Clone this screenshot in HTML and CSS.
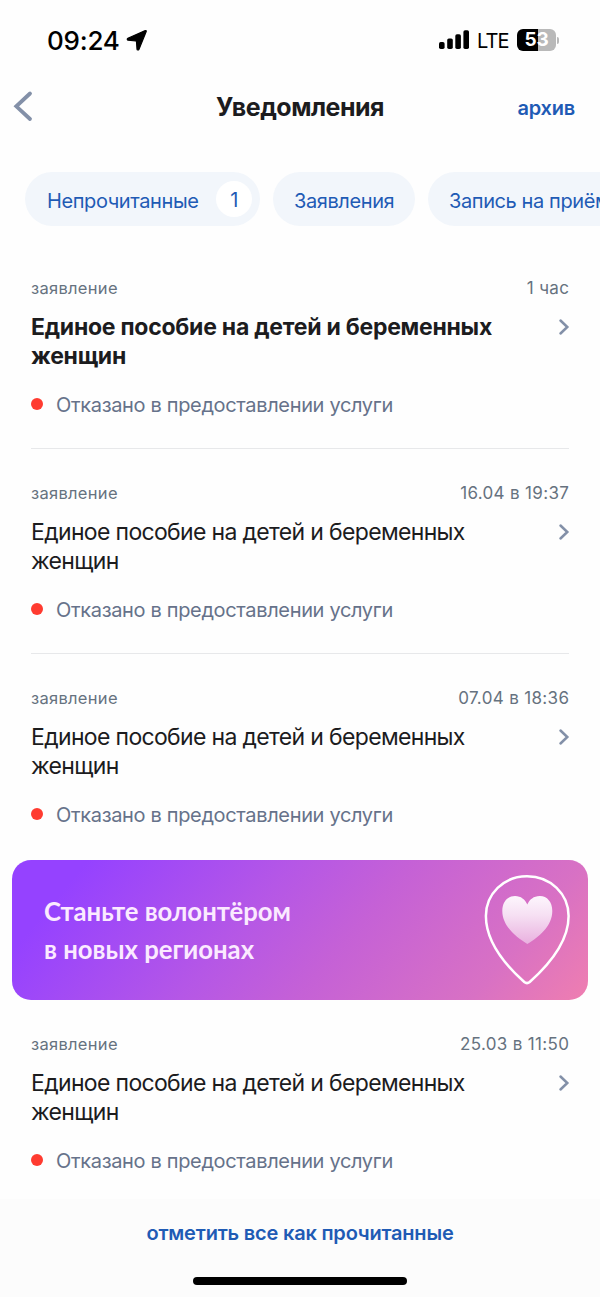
FILE: index.html
```
<!DOCTYPE html>
<html lang="ru">
<head>
<meta charset="utf-8">
<title>Уведомления</title>
<link rel="stylesheet" href="styles.css">
</head>
<body>
<svg class="defs" width="0" height="0" aria-hidden="true">
  <symbol id="chevron" viewBox="0 0 12 18"><path d="M2.5 2.500 9.300 9l-6.800 6.500" fill="none" stroke="#8390a8" stroke-width="2.500" stroke-linecap="round" stroke-linejoin="miter"/></symbol>
</svg>
<div class="statusbar">
  <span class="time">09:24</span>
  <svg class="location" width="22" height="22" viewBox="0 0 22 22"><path d="M19.300 1.600 1.900 9.200c-1 .5-.8 1.900.3 2l7.500.8c.5.100.8.300.8.800l.500 7.300c.100 1 1.400 1.200 1.900.300l7.300-17.800c.300-.8-.2-1.300-.9-1z" fill="#000" stroke="#000" stroke-width="1.200" stroke-linejoin="round"/></svg>
  <svg class="signal" width="31" height="20" viewBox="0 0 31 20"><rect x="0" y="12" width="5.600" height="7" rx="1.700"/><rect x="8.200" y="8.400" width="5.600" height="10.600" rx="1.700"/><rect x="16.300" y="4.300" width="5.600" height="14.700" rx="1.700"/><rect x="24.400" y="0.300" width="5.600" height="18.700" rx="1.700"/></svg>
  <span class="lte">LTE</span>
  <span class="battery">53</span><span class="battery-tip"></span>
</div>
<header class="header">
  <svg class="back" width="20" height="32" viewBox="0 0 20 32"><path d="M17 3.500 3.300 16.300 17 29" fill="none" stroke="#8390a8" stroke-width="3.800" stroke-linecap="round"/></svg>
  <h1 class="heading">Уведомления</h1>
  <a class="archive">архив</a>
</header>
<nav class="chips">
  <span class="chip chip-unread"><span class="chip-text-unread">Непрочитанные</span><span class="count">1</span></span>
  <span class="chip chip-apps">Заявления</span>
  <span class="chip chip-visit">Запись на приём</span>
</nav>
<main>
  <article class="item unread">
    <div class="meta"><span>заявление</span><span class="date">1 час</span></div>
    <div class="row"><h2 class="title">Единое пособие на детей и беременных<br>женщин</h2><svg class="chevron" width="12" height="18"><use href="#chevron"/></svg></div>
    <div class="status"><i class="dot"></i><span>Отказано в предоставлении услуги</span></div>
  </article>
  <article class="item">
    <div class="meta"><span>заявление</span><span class="date">16.04 в 19:37</span></div>
    <div class="row"><h2 class="title">Единое пособие на детей и беременных<br>женщин</h2><svg class="chevron" width="12" height="18"><use href="#chevron"/></svg></div>
    <div class="status"><i class="dot"></i><span>Отказано в предоставлении услуги</span></div>
  </article>
  <article class="item plain">
    <div class="meta"><span>заявление</span><span class="date">07.04 в 18:36</span></div>
    <div class="row"><h2 class="title">Единое пособие на детей и беременных<br>женщин</h2><svg class="chevron" width="12" height="18"><use href="#chevron"/></svg></div>
    <div class="status"><i class="dot"></i><span>Отказано в предоставлении услуги</span></div>
  </article>
  <section class="banner">
    <p class="banner-text">Станьте волонтёром<br>в новых регионах</p>
    <svg class="pin" width="88" height="112" viewBox="0 0 88 112">
      <defs><linearGradient id="heart" x1="0" y1="0" x2="0" y2="1"><stop offset="0" stop-color="#fdf6fd"/><stop offset="0.4" stop-color="#f6e0f3"/><stop offset="1" stop-color="#e9b0df"/></linearGradient></defs>
      <path d="M44 2.300C20.500 2.300 2.900 20 2.900 42C2.900 66 20 89 41.300 108C43.200 109.600 44.800 109.600 46.700 108C68 89 85.600 66 85.600 42C85.600 20 67.500 2.300 44 2.300z" fill="none" stroke="#fff" stroke-width="2.500"/>
      <path d="M44.300 70C33 63 19.300 52 19.300 37C19.300 28 24.500 22 32 22C38 22 42 25.500 44.300 30.500C46.600 25.500 50.600 22 56.800 22C64.200 22 69.300 28 69.300 37C69.300 52 56 63 44.300 70z" fill="url(#heart)"/>
    </svg>
  </section>
  <article class="item last">
    <div class="meta"><span>заявление</span><span class="date">25.03 в 11:50</span></div>
    <div class="row"><h2 class="title">Единое пособие на детей и беременных<br>женщин</h2><svg class="chevron" width="12" height="18"><use href="#chevron"/></svg></div>
    <div class="status"><i class="dot"></i><span>Отказано в предоставлении услуги</span></div>
  </article>
</main>
<footer class="footer">
  <a class="mark-all">отметить все как прочитанные</a>
  <div class="home"></div>
</footer>
</body>
</html>
```

FILE: styles.css
```
* { box-sizing: border-box; }
body { margin: 0; width: 600px; height: 1297px; overflow: hidden; background: #fefefe; font-family: Inter, "Liberation Sans", sans-serif; color: #1c1c1e; }
.defs { display: block; height: 0; }
.statusbar { display: flex; align-items: center; height: 80px; padding-left: 47px; color: #000; }
.time { font-size: 26px; font-weight: 500; letter-spacing: -0.2px; width: 79px; white-space: nowrap; }
.location { margin-top: -1px; }
.signal { margin-left: 291px; }
.lte { width: 32px; margin-left: 7px; font-size: 20px; white-space: nowrap; letter-spacing: -0.9px; padding-top: 1px; }
.battery { margin-left: 8px; width: 39px; height: 22px; border-radius: 6px; background: linear-gradient(90deg, #000 53%, #b9b9b9 53%); color: #fff; font-size: 19px; font-weight: 700; line-height: 22px; text-align: center; letter-spacing: -0.3px; }
.battery-tip { width: 2px; height: 7px; margin-left: 1px; border-radius: 0 3px 3px 0; background: #b9b9b9; }
.header { display: grid; grid-template-columns: 100px 1fr 100px; align-items: center; height: 54px; padding: 0 25px 0 13px; }
.back { margin-top: -2px; }
.heading { margin: 0 0 0 12px; font-size: 25px; line-height: 32px; font-weight: 650; letter-spacing: -0.5px; text-align: center; white-space: nowrap; }
.archive { justify-self: end; font-size: 20px; font-weight: 600; letter-spacing: -0.2px; color: #1f5bb5; padding-top: 2px; }
.chips { display: flex; gap: 13px; margin-top: 38px; padding-left: 25px; overflow: hidden; }
.chip { flex: none; display: flex; align-items: center; height: 54px; border-radius: 27px; background: #f2f6fb; color: #1f5bb5; font-size: 20px; letter-spacing: -0.4px; white-space: nowrap; padding-top: 3px; }
.chip-unread { width: 235px; padding-left: 22px; padding-top: 0; }
.chip-text-unread { width: 153px; padding-top: 3px; }
.count { width: 36px; height: 36px; margin-left: 16px; border-radius: 50%; background: #fff; line-height: 38px; text-align: center; }
.chip-apps { width: 142px; padding-left: 21px; }
.chip-visit { width: 200px; padding-left: 21px; }
main { padding-top: 18px; }
.item { height: 205px; margin: 0 31px; padding-top: 34px; border-bottom: 1px solid #e7e8ea; }
.item.plain { border-color: transparent; }
.item.last { height: 199px; border: 0; }
.meta { display: flex; justify-content: space-between; height: 20px; line-height: 20px; font-size: 16.5px; letter-spacing: 0.3px; color: #66727f; }
.date { font-size: 17px; line-height: 21px; letter-spacing: 0.34px; margin-right: -0.3px; }
.row { display: flex; justify-content: space-between; height: 59px; margin-top: 14px; }
.title { margin: 1px 0 0; font-size: 23px; line-height: 29.300px; font-weight: 400; white-space: nowrap; letter-spacing: -0.66px; }
.unread .title { font-weight: 650; letter-spacing: -0.25px; }
.chevron { margin-top: 6px; margin-right: -1px; }
.status { display: flex; align-items: center; height: 24px; margin-top: 22px; font-size: 20px; letter-spacing: -0.34px; color: #66728a; white-space: nowrap; }
.dot { width: 12px; height: 12px; margin: -3px 13px 0 0; border-radius: 50%; background: #ff3b30; }
.banner { display: flex; justify-content: space-between; align-items: center; height: 140px; margin: 1px 12px 0; padding: 0 17px 0 32px; border-radius: 19px; background: linear-gradient(130deg, #9542ff 11%, #b557e6 41%, #c561d6 58%, #d871c4 83%, #ef7eb0 100%); }
.banner-text { margin: 0; font-family: Lato, "Noto Sans", sans-serif; font-size: 25.700px; line-height: 38px; font-weight: 700; color: #fbeaff; white-space: nowrap; }
.footer { display: flex; flex-direction: column; align-items: center; height: 98px; padding-top: 20px; background: #fcfcfc; }
.mark-all { height: 28px; line-height: 28px; font-size: 20px; font-weight: 600; letter-spacing: -0.2px; color: #1f5bb5; white-space: nowrap; }
.home { width: 214px; height: 8px; margin-top: 30px; border-radius: 4px; background: #000; }
```
